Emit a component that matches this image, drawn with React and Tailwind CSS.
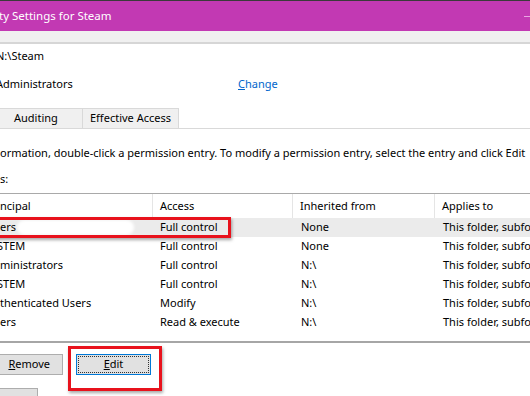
export default function App() {
  const rows = [
    { p: 'ers', a: 'Full control', i: 'None', sel: true },
    { p: 'STEM', a: 'Full control', i: 'None', cut: true },
    { p: 'ministrators', a: 'Full control', i: 'N:\\' },
    { p: 'STEM', a: 'Full control', i: 'N:\\', cut: true },
    { p: 'thenticated Users', a: 'Modify', i: 'N:\\' },
    { p: 'ers', a: 'Read & execute', i: 'N:\\' },
  ];

  return (
    <div className="w-[530px] h-[396px] overflow-hidden bg-white text-black text-[11px] font-['Noto_Sans',sans-serif]">
      {/* title bar */}
      <div className="h-[31px] bg-[#c239b3] border-t border-[#3a3a3a] flex items-center justify-between">
        <span className="text-white text-[11.5px] -ml-[1px] leading-none">ty Settings for Steam</span>
        <span className="w-[6px] h-px bg-[#e9a6e2]" />
      </div>
      <div className="h-[13px] bg-[#f0f0f0] border-b-2 border-[#d6d6d6]" />

      {/* owner info */}
      <div className="mt-[4px] h-[16px] leading-[16px] -ml-[4px]">N:\Steam</div>
      <div className="mt-[12px] h-[16px] leading-[16px] flex">
        <span className="-ml-[4px] w-[242px]">Administrators</span>
        <span className="text-[#0066cc]"><span className="underline">C</span>hange</span>
      </div>

      {/* tabs */}
      <div className="mt-[16px] h-[21px] flex border-b border-[#d9d9d9]">
        <div className="w-[83px] h-[20px] bg-[#f0f0f0] border-r border-t border-[#d9d9d9] flex items-center pl-[14px]">Auditing</div>
        <div className="w-[96px] h-[20px] bg-[#f0f0f0] border-r border-t border-[#d9d9d9] flex items-center pl-[7px]">Effective Access</div>
      </div>

      <div className="mt-[16px] h-[16px] leading-[16px] whitespace-nowrap">ormation, double-click a permission entry. To modify a permission entry, select the entry and click Edit</div>
      <div className="mt-[10px] h-[16px] leading-[16px]">s:</div>

      {/* permission table */}
      <div className="mt-[6px] border-t border-[#a9a9a9] h-[150px] border-b-2 border-b-[#a6a6a6]">
        <div className="grid grid-cols-[153px_140px_142px_1fr] h-[24px]">
          <div className="border-r border-[#e5e5e5] flex items-center">ncipal</div>
          <div className="border-r border-[#e5e5e5] flex items-center pl-[7px]">Access</div>
          <div className="border-r border-[#e5e5e5] flex items-center pl-[7px]">Inherited from</div>
          <div className="flex items-center pl-[7px] whitespace-nowrap">Applies to</div>
        </div>
        {rows.map((r, idx) => (
          <div key={idx} className={`relative grid grid-cols-[153px_140px_142px_1fr] h-[19px] ${r.sel ? 'bg-[#ebebeb]' : ''}`}>
            <div className="flex items-center whitespace-nowrap">
              <span className={r.cut ? '-ml-[3px]' : ''}>{r.p}</span>
              {r.sel && <span className="ml-[1px] w-[117px] h-[15px] rounded-full bg-white blur-[1.5px]" />}
            </div>
            <div className="flex items-center pl-[7px] whitespace-nowrap">{r.a}</div>
            <div className="flex items-center pl-[8px]">{r.i}</div>
            <div className="flex items-center pl-[8px] whitespace-nowrap">This folder, subfolders and files</div>
            {r.sel && (
              <div className="absolute -left-[4px] top-[-1px] w-[235px] h-[21px] border-[3px] border-[#e8121c] shadow-[1px_2px_3px_rgba(0,0,0,0.35)]" />
            )}
          </div>
        ))}
      </div>

      {/* buttons */}
      <div className="mt-[11px] h-[21px] flex items-start">
        <div className="-ml-[12px] w-[75px] h-[21px] shrink-0 bg-[#e1e1e1] border border-[#adadad] flex items-center justify-end pr-[12px]">
          <span><span className="underline">R</span>emove</span>
        </div>
        <div className="ml-[5px] -mt-[8px] pt-[5px] pl-[5px] pr-[8px] pb-[13px] border-[3px] border-[#e8121c] shadow-[1px_2px_3px_rgba(0,0,0,0.35)]">
          <div className="w-[75px] h-[21px] bg-[#e1e1e1] border border-[#0078d7] p-[1px]">
            <div className="w-full h-full border border-dotted border-[#333] flex items-center justify-center">
              <span><span className="underline">E</span>dit</span>
            </div>
          </div>
        </div>
      </div>
      <div className="mt-[13px] -ml-[10px] w-[48px] h-[21px] bg-[#e1e1e1] border border-[#adadad]" />
    </div>
  );
}
